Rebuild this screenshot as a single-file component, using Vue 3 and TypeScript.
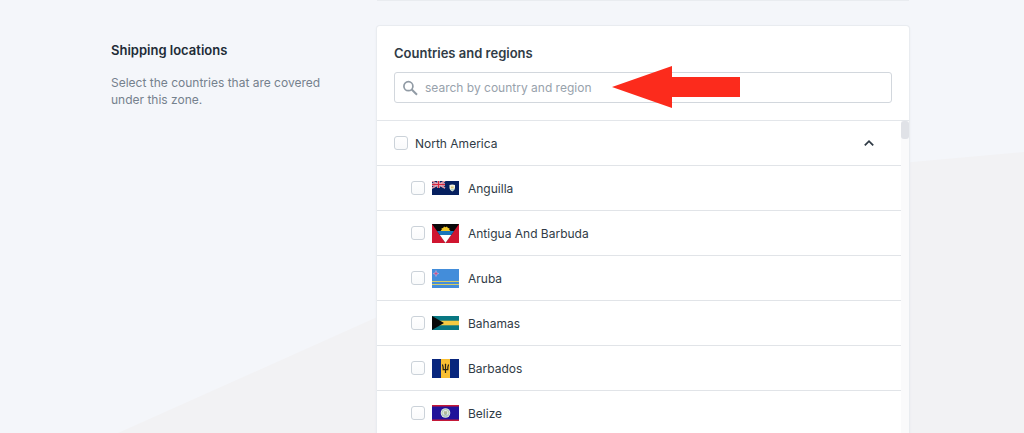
<script setup lang="ts">
import { ref, computed } from 'vue'

interface Country {
  id: string
  name: string
  flagHeight: number
}

const countries: Country[] = [
  { id: 'ai', name: 'Anguilla', flagHeight: 14 },
  { id: 'ag', name: 'Antigua And Barbuda', flagHeight: 19 },
  { id: 'aw', name: 'Aruba', flagHeight: 19 },
  { id: 'bs', name: 'Bahamas', flagHeight: 14 },
  { id: 'bb', name: 'Barbados', flagHeight: 19 },
  { id: 'bz', name: 'Belize', flagHeight: 16 },
]

const query = ref('')
const open = ref(true)
const selected = ref<string[]>([])

const visible = computed(() =>
  countries.filter((c) => c.name.toLowerCase().includes(query.value.toLowerCase())),
)

const allSelected = computed({
  get: () => selected.value.length === countries.length,
  set: (on: boolean) => {
    selected.value = on ? countries.map((c) => c.id) : []
  },
})
</script>

<template>
  <main class="page">
    <svg class="backdrop" viewBox="0 0 1024 433" preserveAspectRatio="none" aria-hidden="true">
      <path d="M118 433L375 318Q640 194 912 162L1024 152V433Z" fill="#f2f2f4" />
    </svg>

    <div class="content">
      <div class="previous"></div>

      <section class="intro">
        <h2>Shipping locations</h2>
        <p>Select the countries that are covered under this zone.</p>
      </section>

      <section class="card">
        <header class="card-head">
          <label class="title" for="search">Countries and regions</label>
          <div class="field">
            <svg class="glass" viewBox="0 0 16 16" aria-hidden="true">
              <circle cx="6.4" cy="6.2" r="4.5" fill="none" stroke="#919ba5" stroke-width="1.7" />
              <path d="M9.7 9.5L15 14.8" stroke="#919ba5" stroke-width="2" />
            </svg>
            <input id="search" v-model="query" type="text" placeholder="search by country and region" />
            <svg class="arrow" viewBox="0 0 128 42" aria-hidden="true">
              <path d="M0 21L60 0V11H128V31H60V42Z" fill="#fc2b1c" />
            </svg>
          </div>
        </header>

        <div class="scroller">
          <div class="list">
            <div class="row group">
              <input id="na" v-model="allSelected" type="checkbox" />
              <label class="group-name" for="na">North America</label>
              <button type="button" aria-label="Toggle North America" :aria-expanded="open" @click="open = !open">
                <svg viewBox="0 0 12 8" aria-hidden="true">
                  <path d="M1.8 6.3L6 2.2L10.2 6.3" fill="none" stroke="#303b46" stroke-width="1.8" />
                </svg>
              </button>
            </div>

            <template v-if="open">
              <div v-for="c in visible" :key="c.id" class="row country">
                <input :id="c.id" v-model="selected" type="checkbox" :value="c.id" />
                <svg class="flag" :viewBox="`0 0 27 ${c.flagHeight}`" aria-hidden="true">
                  <g v-if="c.id === 'ai'">
                    <path d="M0 0H27V14H0Z" fill="#06205f" />
                    <path d="M0 0L13 7M13 0L0 7" stroke="#f3dce4" stroke-width="1.5" />
                    <path d="M0 0L13 7M13 0L0 7" stroke="#d5394f" stroke-width=".6" />
                    <path d="M6.5 0V7M0 3.5H13" stroke="#f6e4ea" stroke-width="2.4" />
                    <path d="M6.5 0V7M0 3.5H13" stroke="#d62840" stroke-width="1.3" />
                    <path d="M17.5 4Q20.3 3.2 23 4V7Q22.8 9.3 20.3 10.5Q17.7 9.3 17.5 7Z" fill="#f3f2dc" />
                    <path d="M19 5.5H21.6V7.3H19Z" fill="#d6c678" />
                    <path d="M18.3 8.3H22.3L20.3 9.8Z" fill="#91c6c8" />
                  </g>
                  <g v-else-if="c.id === 'ag'">
                    <path d="M0 0H27V19H0Z" fill="#d01530" />
                    <path d="M0 0H27L13.5 19Z" fill="#090909" />
                    <path d="M5 7H22L19.2 11H7.8Z" fill="#1875ba" />
                    <path d="M8.5 7L9.8 5.6L9.5 4.2L11.1 4L12 2.6L13.5 3.2L15 2.6L15.9 4L17.5 4.2L17.2 5.6L18.5 7Z" fill="#f2c928" />
                    <path d="M7.8 11H19.2L13.5 19Z" fill="#fff" />
                  </g>
                  <g v-else-if="c.id === 'aw'">
                    <path d="M0 0H27V19H0Z" fill="#438dda" />
                    <path d="M0 12.5H27M0 15.5H27" stroke="#d3cb65" stroke-width="1.2" />
                    <path d="M4 1.5L4.8 3.8L7 4.5L4.8 5.3L4 7.5L3.2 5.3L1 4.5L3.2 3.8Z" fill="#c84e83" stroke="#cbb9e4" stroke-width=".5" />
                  </g>
                  <g v-else-if="c.id === 'bs'">
                    <path d="M0 0H27V14H0Z" fill="#087782" />
                    <path d="M0 4.7H27V9.3H0Z" fill="#f4ca43" />
                    <path d="M0 0L12 7L0 14Z" fill="#080808" />
                  </g>
                  <g v-else-if="c.id === 'bb'">
                    <path d="M0 0H27V19H0Z" fill="#08267d" />
                    <path d="M9 0H18V19H9Z" fill="#f9bf33" />
                    <path d="M10.4 5.5Q11.3 7.5 11.2 10.6H15.8Q15.7 7.5 16.6 5.5M13.5 5V14" fill="none" stroke="#251f13" stroke-width="1.2" />
                    <path d="M12.7 6L13.5 4.2L14.3 6Z" fill="#251f13" />
                  </g>
                  <g v-else>
                    <path d="M0 0H27V16H0Z" fill="#20129a" />
                    <path d="M0 0H27V1.6H0ZM0 14.4H27V16H0Z" fill="#c51938" />
                    <circle cx="13.5" cy="8" r="4.8" fill="#e9eee9" />
                    <circle cx="13.5" cy="8" r="3.6" fill="none" stroke="#8db797" stroke-width=".7" />
                    <path d="M11.8 6.2H15.2V8.4L13.5 10L11.8 8.4Z" fill="#afba98" />
                    <path d="M11.5 10H15.5" stroke="#7c9bab" stroke-width=".8" />
                  </g>
                </svg>
                <label :for="c.id">{{ c.name }}</label>
              </div>
            </template>
          </div>
          <div class="track"><div class="thumb"></div></div>
        </div>
      </section>
    </div>
  </main>
</template>

<style>
body {
  margin: 0;
  background: #f4f6fa;
}
</style>

<style scoped>
* {
  box-sizing: border-box;
}

.page {
  position: relative;
  height: 100vh;
  overflow: hidden;
  font-family: Inter, "Liberation Sans", sans-serif;
  font-size: 12px;
  line-height: 17px;
  color: #303b46;
}

.backdrop {
  position: absolute;
  inset: 0;
  width: 100%;
  height: 100%;
}

.content {
  position: relative;
  display: grid;
  grid-template-columns: 1fr 2fr;
  row-gap: 25px;
  padding: 0 115px 0 111px;
}

.previous {
  grid-column: 2;
  height: 1px;
  background: #e9ecf0;
}

.intro {
  padding: 14px 48px 0 0;
}

h2 {
  margin: 0;
  font-size: 13px;
  font-weight: 600;
  line-height: 20px;
  color: #212b36;
}

.intro p {
  margin: 14px 0 0;
  color: #75818d;
}

.card {
  min-width: 0;
  border-radius: 3px 3px 0 0;
  background: #fff;
  box-shadow: 0 0 0 1px #e9ecf0, 0 1px 3px #dde1e7;
}

.card-head {
  padding: 17px 17px;
}

.title {
  display: block;
  margin-bottom: 9px;
  font-size: 13px;
  font-weight: 600;
  line-height: 20px;
}

.field {
  position: relative;
}

.field input {
  display: block;
  width: 100%;
  height: 31px;
  padding: 0 12px 0 30px;
  border: 1px solid #d2d7dd;
  border-radius: 3px;
  background: #fff;
  font: inherit;
  color: #303b46;
}

.field input::placeholder {
  color: #98a2ac;
  opacity: 1;
}

.glass {
  position: absolute;
  top: 8px;
  left: 8px;
  width: 16px;
  height: 16px;
}

.arrow {
  position: absolute;
  top: -6px;
  left: 218px;
  width: 128px;
  height: 42px;
  pointer-events: none;
}

.scroller {
  display: flex;
  border-top: 1px solid #e3e6ea;
}

.list {
  flex: 1;
}

.row {
  display: flex;
  align-items: center;
  height: 45px;
  padding: 0 26px 0 34px;
  border-bottom: 1px solid #e1e4e8;
}

.group {
  padding-left: 17px;
}

.group-name {
  flex: 1;
}

.row input {
  appearance: none;
  flex: none;
  width: 14px;
  height: 14px;
  margin: 0 7px 0 0;
  border: 1px solid #cbd2d9;
  border-radius: 3px;
  background: linear-gradient(#fff, #f9fafb);
}

.row input:checked {
  border-color: #5c6ac4;
  background: #5c6ac4;
}

.flag {
  flex: none;
  width: 27px;
  margin-right: 9px;
}

button {
  display: flex;
  padding: 0;
  border: 0;
  background: none;
}

button svg {
  width: 12px;
  height: 8px;
}

.track {
  width: 8px;
  background: #fafafb;
}

.thumb {
  height: 18px;
  border-radius: 3px;
  background: #e0e2e7;
}
</style>
